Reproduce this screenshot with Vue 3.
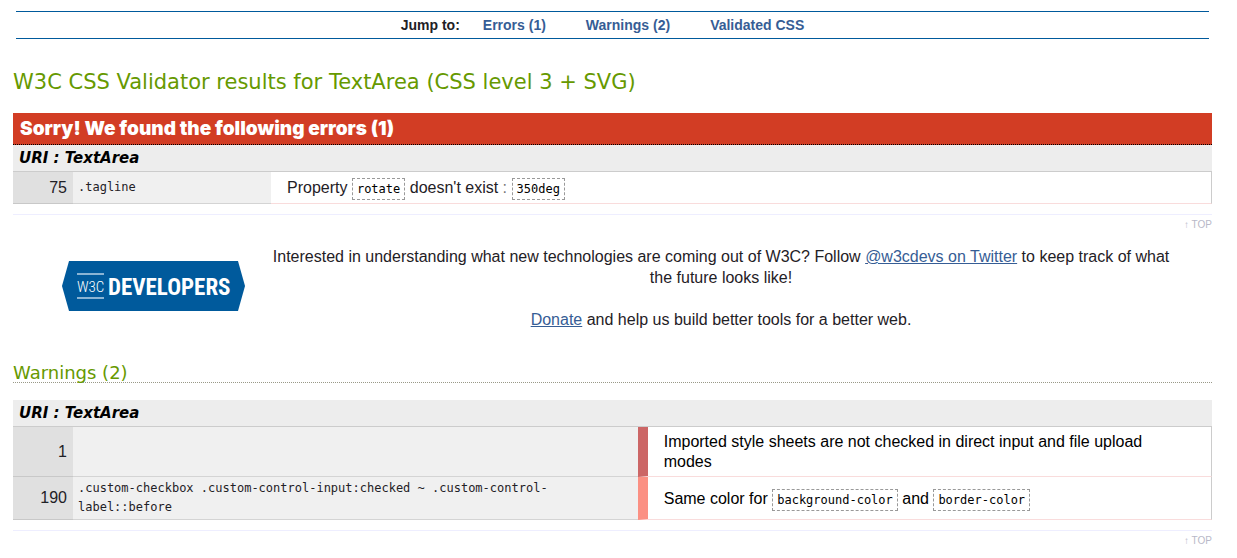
<script setup>
const jumps = [
  { label: 'Errors (1)', href: '#errors' },
  { label: 'Warnings (2)', href: '#warnings' },
  { label: 'Validated CSS', href: '#css' },
]
</script>

<template>
  <main class="page">
    <nav class="jumpbar">
      <strong>Jump to:</strong>
      <a v-for="jump in jumps" :key="jump.href" :href="jump.href">{{ jump.label }}</a>
    </nav>

    <h1 class="title">W3C CSS Validator results for TextArea (CSS level 3 + SVG)</h1>

    <section id="errors">
      <h2 class="sorry">Sorry! We found the following errors (1)</h2>
      <h3 class="uri">URI : TextArea</h3>
      <table class="report">
        <tbody>
          <tr>
            <td class="line">75</td>
            <td class="context error-context">.tagline</td>
            <td class="message error-message">
              Property <code>rotate</code> doesn't exist <span class="colon">:</span> <code>350deg</code>
            </td>
          </tr>
        </tbody>
      </table>
    </section>
    <p class="top"><a href="#app">↑ TOP</a></p>

    <section class="promo">
      <a class="logo" href="#developers" aria-label="W3C Developers">
        <svg width="183" height="50" viewBox="0 0 183 50">
          <path d="M7 0H176L183 25L176 50H7L0 25Z" fill="#005a9c" />
          <path d="M15 13H42M15 37H42" stroke="#8ab4d4" stroke-width="2" />
          <text class="logo-w3c" x="15" y="31">W3C</text>
          <text class="logo-dev" x="46" y="34">DEVELOPERS</text>
        </svg>
      </a>
      <div class="promo-text">
        <p>
          Interested in understanding what new technologies are coming out of W3C? Follow
          <a href="#twitter">@w3cdevs on Twitter</a> to keep track of what the future looks like!
        </p>
        <p><a href="#donate">Donate</a> and help us build better tools for a better web.</p>
      </div>
    </section>

    <section id="warnings">
      <h2 class="warn-title">Warnings (2)</h2>
      <h3 class="uri">URI : TextArea</h3>
      <table class="report">
        <tbody>
          <tr>
            <td class="line">1</td>
            <td class="context warn-context"></td>
            <td class="message warn-message level-one">
              Imported style sheets are not checked in direct input and file upload modes
            </td>
          </tr>
          <tr>
            <td class="line">190</td>
            <td class="context warn-context">
              .custom-checkbox .custom-control-input:checked ~ .custom-control-label::before
            </td>
            <td class="message warn-message level-zero">
              Same color for <code>background-color</code> and <code>border-color</code>
            </td>
          </tr>
        </tbody>
      </table>
    </section>
    <p class="top"><a href="#app">↑ TOP</a></p>
  </main>
</template>

<style>
body {
  margin: 0;
  background: #fff;
}
</style>

<style scoped>
.page {
  padding: 11px 25px 0 13px;
  font: 16px/20px "Liberation Sans", Arial, sans-serif;
  color: #1f2126;
}
h1,
h2,
h3,
p {
  margin: 0;
}
a {
  color: #365d95;
}
.jumpbar {
  display: flex;
  justify-content: center;
  margin: 0 3px;
  padding-right: 20px;
  border-top: 1px solid #005a9c;
  border-bottom: 1px solid #005a9c;
  font-size: 14px;
  font-weight: bold;
  line-height: 26px;
}
.jumpbar strong {
  margin-right: 23px;
}
.jumpbar a {
  margin-right: 40px;
  text-decoration: none;
}
.jumpbar a:last-child {
  margin-right: 0;
}
.title {
  margin: 29px 0 17px;
  color: #690;
  font: 21px/28px "DejaVu Sans", Verdana, sans-serif;
}
.sorry {
  padding-left: 7px;
  border-bottom: 1px dotted #000;
  background: #d23d24;
  color: #fff;
  font: 900 19px/31px Inter, "Arial Black", sans-serif;
}
.uri {
  padding-left: 6px;
  background: #ededed;
  color: #000;
  font: italic bold 15px/26px "DejaVu Sans", Verdana, sans-serif;
}
.report {
  width: 100%;
  table-layout: fixed;
  border-spacing: 0;
  border-top: 1px solid #ccc;
}
.report td {
  padding: 0;
  border-bottom: 1px solid #d4d4d4;
}
.report .line {
  width: 54px;
  padding-right: 6px;
  background: #e0e0e0;
  border-bottom-color: #c8c8c8;
  text-align: right;
}
.report .context {
  padding: 2px 5px;
  background: #f0f0f0;
  font: 12px/19px "DejaVu Sans Mono", monospace;
}
.report .error-context {
  width: 188px;
}
.report .warn-context {
  width: 47.1%;
  box-sizing: border-box;
}
.report .message {
  padding: 6px 16px 5px;
  border-right: 1px solid #ccc;
  border-bottom-color: #f9dcdc;
}
.report .warn-message {
  padding: 5px 32px 4px 16px;
  border-left: 10px solid;
  color: #000;
}
.report .level-one {
  border-left-color: #cc6666;
}
.report .level-zero {
  border-left-color: #fb9083;
}
.colon {
  color: #777;
}
code {
  padding: 3px 4px;
  border: 1px dashed #999;
  color: #000;
  font: 12px/14px "DejaVu Sans Mono", monospace;
}
.top {
  margin-top: 10px;
  border-top: 1px solid #eef;
  font-size: 10px;
  line-height: 19px;
  text-align: right;
}
.top a {
  color: #b8b8c8;
  text-decoration: none;
}
.promo {
  display: flex;
  align-items: flex-start;
  gap: 16px;
  margin-top: 12px;
  padding: 0 31px 0 49px;
  line-height: 21px;
}
.logo {
  margin-top: 15px;
}
.logo svg {
  display: block;
}
.logo-w3c {
  fill: #fff;
  font: 300 15px "Roboto Condensed", Lato, sans-serif;
}
.logo-dev {
  fill: #fff;
  font: bold 23px "Liberation Sans Narrow", "Roboto Condensed", "DejaVu Sans Condensed", sans-serif;
}
.promo-text {
  flex: 1;
  text-align: center;
}
.promo-text p + p {
  margin-top: 21px;
}
.warn-title {
  margin: 34px 0 17px;
  border-bottom: 1px dotted #998;
  color: #690;
  font: 18px/18px "DejaVu Sans", Verdana, sans-serif;
}
</style>
